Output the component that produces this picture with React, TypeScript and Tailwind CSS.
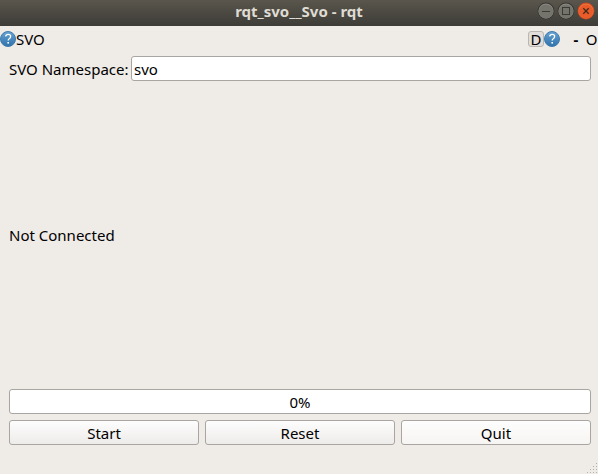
import { useId, useState } from "react";

function HelpIcon() {
  const id = useId();
  return (
    <svg viewBox="0 0 16 16" className="block size-4" aria-hidden="true">
      <defs>
        <linearGradient id={id} x1="0" y1="0" x2="0" y2="1">
          <stop offset="0" stopColor="#6ba3d2" />
          <stop offset="0.5" stopColor="#4a8abf" />
          <stop offset="1" stopColor="#2f72ab" />
        </linearGradient>
      </defs>
      <circle cx="8" cy="8" r="7.5" fill={`url(#${id})`} stroke="#3f7caf" />
      <path
        d="M5.6 5.4C5.8 4 6.8 3.3 8.1 3.3c1.5 0 2.5.8 2.5 2.1 0 1.1-.6 1.7-1.4 2.3-.7.5-1 .9-1 1.8"
        fill="none"
        stroke="#fff"
        strokeWidth="1.3"
      />
      <rect x="7.4" y="11" width="1.6" height="1.6" fill="#fff" />
    </svg>
  );
}

function WindowButton({ kind }: { kind: "Minimize" | "Maximize" | "Close" }) {
  const close = kind === "Close";
  return (
    <button type="button" aria-label={kind} className="block size-[18px]">
      <svg viewBox="0 0 18 18" className="block size-[18px]" aria-hidden="true">
        <circle cx="9" cy="9" r="8.4" fill={close ? "#c9481d" : "#35342f"} />
        <circle cx="9" cy="9" r="7.6" fill={close ? "#f07746" : "#8d8b83"} />
        <circle cx="9" cy="9.5" r="7.1" fill={close ? "#ea5b2a" : "#74736c"} />
        <g fill="none" stroke={close ? "#3f2a1f" : "#3b3a35"}>
          {kind === "Minimize" && <path d="M5 9.5h8" />}
          {kind === "Maximize" && <rect x="5.5" y="5.5" width="7" height="7" />}
          {close && <path d="M6.3 6.3l5.4 5.4M11.7 6.3l-5.4 5.4" strokeWidth="1.3" />}
        </g>
      </svg>
    </button>
  );
}

function PushButton({ label }: { label: string }) {
  return (
    <button
      type="button"
      className="h-[25px] flex-1 rounded-[3px] border border-[#a9a5a2] bg-linear-to-b from-[#fdfdfd] to-[#eeecea] leading-5 last:to-[#f7f5f3]"
    >
      {label}
    </button>
  );
}

export default function App() {
  const [namespace, setNamespace] = useState("svo");
  return (
    <div className="flex min-h-screen flex-col overflow-hidden bg-[#efebe7] font-['Noto_Sans',sans-serif] text-[15px] leading-5 text-black">
      <header className="grid h-[26px] grid-cols-[1fr_auto_1fr] items-center bg-linear-to-b from-[#5a564d] to-[#3d3c37] pb-1">
        <h1 className="col-start-2 leading-5 font-bold text-[#dfdbd2]">rqt_svo__Svo - rqt</h1>
        <div className="flex justify-end gap-0.5 pr-[3px]">
          <WindowButton kind="Minimize" />
          <WindowButton kind="Maximize" />
          <WindowButton kind="Close" />
        </div>
      </header>

      <div className="flex h-[26px] items-center">
        <HelpIcon />
        <h2>SVO</h2>
        <div className="ml-auto flex shrink-0 items-center">
          <button
            type="button"
            className="flex size-4 items-center justify-center rounded-[3px] border border-[#b9b5b1] bg-[#e2dedb]"
          >
            D
          </button>
          <button type="button" aria-label="Help">
            <HelpIcon />
          </button>
          <button type="button" className="ml-2 w-4 font-bold">
            -
          </button>
          <button type="button" className="w-[14px] pl-px">
            O
          </button>
        </div>
      </div>

      <main className="flex flex-1 flex-col pt-1 pr-[7px] pl-[9px]">
        <div className="flex items-center">
          <label htmlFor="namespace" className="w-[122px] whitespace-nowrap">
            SVO Namespace:
          </label>
          <input
            id="namespace"
            type="text"
            value={namespace}
            onChange={(e) => setNamespace(e.target.value)}
            className="h-[25px] min-w-0 flex-1 rounded-[3px] border border-[#a9a5a2] bg-white px-0.5 leading-5 outline-none"
          />
        </div>
        <p className="flex flex-1 items-center">Not Connected</p>
        <div
          role="progressbar"
          aria-label="Progress"
          aria-valuenow={0}
          aria-valuemin={0}
          aria-valuemax={100}
          className="flex h-[25px] items-center justify-center rounded-[3px] border border-[#a9a5a2] bg-white"
        >
          0%
        </div>
        <div className="mt-1.5 flex gap-1.5">
          <PushButton label="Start" />
          <PushButton label="Reset" />
          <PushButton label="Quit" />
        </div>
      </main>

      <footer className="flex h-[29px] items-end justify-end">
        <svg viewBox="0 0 11 11" className="size-[11px]" fill="#b3afab" aria-hidden="true">
          <path d="M9 0h1v1H9zM6 3h1v1H6zM9 3h1v1H9zM3 6h1v1H3zM6 6h1v1H6zM9 6h1v1H9zM0 9h1v1H0zM3 9h1v1H3zM6 9h1v1H6zM9 9h1v1H9z" />
        </svg>
      </footer>
    </div>
  );
}
